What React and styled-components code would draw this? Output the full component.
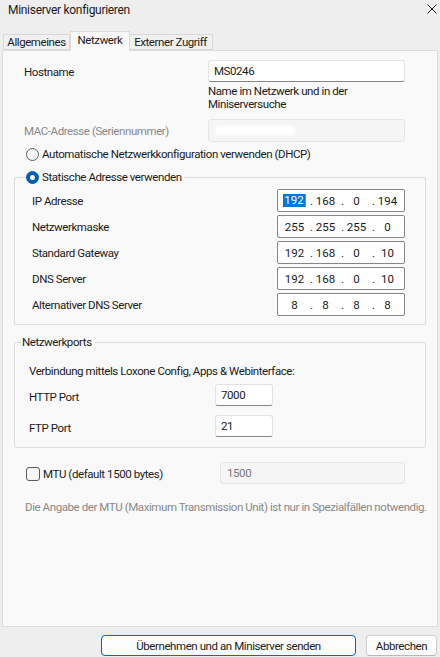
import React from 'react';
import styled, { createGlobalStyle } from 'styled-components';

const GlobalStyle = createGlobalStyle`
  html, body {
    margin: 0;
    padding: 0;
    background: #eeeeee;
  }
  body {
    font-family: "Segoe UI", Roboto, sans-serif;
    font-size: 11.5px;
    letter-spacing: -0.42px;
    color: #1b1b1b;
  }
  * {
    box-sizing: border-box;
  }
`;

const ipRows = [
    { label: 'IP Adresse', octets: ['192', '168', '0', '194'], focused: true },
    { label: 'Netzwerkmaske', octets: ['255', '255', '255', '0'] },
    { label: 'Standard Gateway', octets: ['192', '168', '0', '10'] },
    { label: 'DNS Server', octets: ['192', '168', '0', '10'] },
    { label: 'Alternativer DNS Server', octets: ['8', '8', '8', '8'] },
];

function CloseIcon() {
    return (
        <svg width="10" height="10" viewBox="0 0 10 10">
            <path d="M0.5 0.5 L9.5 9.5 M9.5 0.5 L0.5 9.5" stroke="#1b1b1b" strokeWidth="1" fill="none" />
        </svg>
    );
}

function IpField({ octets, focused }) {
    return (
        <IpBox>
            {octets.map((o, i) => (
                <React.Fragment key={i}>
                    <Octet>
                        {focused && i === 0 ? (
                            <>
                                <Selected>{o}</Selected>
                                <Caret />
                            </>
                        ) : (
                            o
                        )}
                    </Octet>
                    {i < 3 && <Dot>.</Dot>}
                </React.Fragment>
            ))}
        </IpBox>
    );
}

export default function App() {
    return (
        <>
            <GlobalStyle />
            <Dialog>
                <TitleBar>
                    <Title>Miniserver konfigurieren</Title>
                    <CloseButton>
                        <CloseIcon />
                    </CloseButton>
                </TitleBar>

                <TabStrip>
                    <Tab $w={67}>Allgemeines</Tab>
                    <Tab $w={60} $active>
                        Netzwerk
                    </Tab>
                    <Tab $w={85}>Externer Zugriff</Tab>
                </TabStrip>

                <TabPane>
                    <FieldRow $cols="184px 197px">
                        <Label $drop={2}>Hostname</Label>
                        <TextBox $h={22}>MS0246</TextBox>
                    </FieldRow>
                    <HelpText>
                        Name im Netzwerk und in der
                        <br />
                        Miniserversuche
                    </HelpText>

                    <FieldRow $cols="184px 197px" $top={8}>
                        <Label $muted>MAC-Adresse (Seriennummer)</Label>
                        <DisabledBox>
                            <Redacted />
                        </DisabledBox>
                    </FieldRow>

                    <OptionRow $top={4}>
                        <Radio />
                        <span>Automatische Netzwerkkonfiguration verwenden (DHCP)</span>
                    </OptionRow>

                    <GroupBox $top={7}>
                        <GroupLegend $left={11}>
                            <OptionRow>
                                <Radio $checked />
                                <span>Statische Adresse verwenden</span>
                            </OptionRow>
                        </GroupLegend>
                        <IpList>
                            {ipRows.map((r) => (
                                <IpRow key={r.label}>
                                    <Label>{r.label}</Label>
                                    <IpField octets={r.octets} focused={r.focused} />
                                </IpRow>
                            ))}
                        </IpList>
                    </GroupBox>

                    <GroupBox $top={9}>
                        <GroupLegend $left={6}>
                            <LegendText>Netzwerkports</LegendText>
                        </GroupLegend>
                        <PortIntro>Verbindung mittels Loxone Config, Apps &amp; Webinterface:</PortIntro>
                        <PortList>
                            <PortRow>
                                <Label $drop={3}>HTTP Port</Label>
                                <TextBox $h={22}>7000</TextBox>
                            </PortRow>
                            <PortRow>
                                <Label $drop={3}>FTP Port</Label>
                                <TextBox $h={22}>21</TextBox>
                            </PortRow>
                        </PortList>
                    </GroupBox>

                    <FieldRow $cols="194px 185px" $top={14} $indent={12}>
                        <CheckRow>
                            <Checkbox />
                            <span>MTU (default 1500 bytes)</span>
                        </CheckRow>
                        <DisabledBox $h={22}>1500</DisabledBox>
                    </FieldRow>

                    <Note>Die Angabe der MTU (Maximum Transmission Unit) ist nur in Spezialfällen notwendig.</Note>
                </TabPane>

                <Footer>
                    <Button $w={255} $primary>
                        Übernehmen und an Miniserver senden
                    </Button>
                    <Button $w={71}>Abbrechen</Button>
                </Footer>
            </Dialog>
        </>
    );
}

const Dialog = styled.div`
    width: 440px;
    height: 657px;
    display: flex;
    flex-direction: column;
    background: #eeeeee;
    overflow: hidden;
`;

const TitleBar = styled.div`
    height: 31px;
    flex-shrink: 0;
    display: flex;
    align-items: flex-start;
    justify-content: space-between;
    padding: 2px 3px 0 8px;
`;

const Title = styled.div`
    font-size: 12px;
    letter-spacing: -0.3px;
    line-height: 16px;
`;

const CloseButton = styled.div`
    display: flex;
    padding-top: 2px;
`;

const TabStrip = styled.div`
    height: 20px;
    flex-shrink: 0;
    display: flex;
    align-items: flex-start;
    padding-left: 3px;
    margin-bottom: -1px;
    position: relative;
    z-index: 1;
`;

const Tab = styled.div`
    width: ${(p) => p.$w}px;
    height: ${(p) => (p.$active ? 20 : 16)}px;
    margin-top: ${(p) => (p.$active ? 0 : 3)}px;
    margin-left: ${(p) => (p.$active ? 0 : -1)}px;
    margin-right: ${(p) => (p.$active ? -1 : 0)}px;
    display: flex;
    align-items: center;
    justify-content: center;
    padding-bottom: ${(p) => (p.$active ? 3 : 0)}px;
    background: ${(p) => (p.$active ? '#f9f9f9' : '#f0f0f0')};
    border: 1px solid #d9d9d9;
    border-bottom: ${(p) => (p.$active ? 'none' : '1px solid #d9d9d9')};
    position: relative;
    z-index: ${(p) => (p.$active ? 2 : 1)};
    white-space: nowrap;

    &:first-child {
        margin-left: 0;
    }
`;

const TabPane = styled.div`
    flex: 1;
    margin: 0 2px;
    background: #f9f9f9;
    border: 1px solid #dcdcdc;
    padding: 9px 11px 0;
    display: flex;
    flex-direction: column;
`;

const FieldRow = styled.div`
    display: grid;
    grid-template-columns: ${(p) => p.$cols};
    align-items: center;
    padding-left: ${(p) => p.$indent ?? 10}px;
    margin-top: ${(p) => p.$top ?? 0}px;
`;

const Label = styled.div`
    line-height: 16px;
    padding-top: ${(p) => p.$drop ?? 0}px;
    color: ${(p) => (p.$muted ? '#8a8a8a' : '#1b1b1b')};
    white-space: nowrap;
`;

const TextBox = styled.div`
    height: ${(p) => p.$h ?? 22}px;
    background: #ffffff;
    border: 1px solid #e3e3e3;
    border-bottom-color: #868686;
    border-radius: 3px;
    padding: 0 5px;
    display: flex;
    align-items: center;
    line-height: 16px;
`;

const DisabledBox = styled.div`
    height: ${(p) => p.$h ?? 23}px;
    background: #f5f5f5;
    border: 1px solid #e5e5e5;
    border-radius: 3px;
    padding: 0 6px;
    display: flex;
    align-items: center;
    color: #7a7a7a;
    line-height: 16px;
`;

const Redacted = styled.span`
    width: 80px;
    height: 9px;
    background: #ffffff;
    filter: blur(1.5px);
`;

const HelpText = styled.div`
    margin: 3px 0 0 194px;
    line-height: 13px;
`;

const OptionRow = styled.div`
    display: flex;
    align-items: center;
    gap: 3px;
    height: 16px;
    padding-left: ${(p) => (p.$top !== undefined ? 12 : 0)}px;
    margin-top: ${(p) => p.$top ?? 0}px;
    white-space: nowrap;
`;

const Radio = styled.span`
    width: 13px;
    height: 13px;
    border-radius: 50%;
    flex-shrink: 0;
    background: ${(p) => (p.$checked ? '#005fb8' : '#f6f6f6')};
    border: 1px solid ${(p) => (p.$checked ? '#005fb8' : '#5c5c5c')};
    display: flex;
    align-items: center;
    justify-content: center;

    &::after {
        content: '';
        display: ${(p) => (p.$checked ? 'block' : 'none')};
        width: 5px;
        height: 5px;
        border-radius: 50%;
        background: #ffffff;
    }
`;

const GroupBox = styled.fieldset`
    margin: ${(p) => p.$top ?? 0}px 0 0;
    padding: 0;
    min-width: 0;
    border: 1px solid #dcdcdc;
    border-radius: 2px;
`;

const GroupLegend = styled.legend`
    margin-left: ${(p) => p.$left}px;
    padding: 0 2px 0 0;
    line-height: 16px;
`;

const LegendText = styled.span`
    display: block;
    padding: 0 1px;
    line-height: 16px;
`;

const IpList = styled.div`
    display: flex;
    flex-direction: column;
    gap: 3px;
    padding: 4px 0 8px 17px;
`;

const IpRow = styled.div`
    display: grid;
    grid-template-columns: 245px 128px;
    align-items: center;
`;

const IpBox = styled.div`
    height: 23px;
    background: #ffffff;
    border: 1px solid #868686;
    border-radius: 2px;
    display: flex;
    align-items: center;
    padding-left: 4px;
    line-height: 16px;
    letter-spacing: 0;
`;

const Octet = styled.span`
    width: 25px;
    display: flex;
    justify-content: center;
    align-items: center;
`;

const Dot = styled.span`
    width: 6px;
    padding-left: 3px;
`;

const Selected = styled.span`
    background: #0078d7;
    color: #ffffff;
    line-height: 13px;
    padding: 0 1px;
`;

const Caret = styled.span`
    width: 1px;
    height: 13px;
    background: #c0782c;
`;

const PortIntro = styled.div`
    margin-top: 13px;
    padding-left: 14px;
    line-height: 16px;
    white-space: nowrap;
`;

const PortList = styled.div`
    display: flex;
    flex-direction: column;
    gap: 9px;
    padding: 5px 0 10px 14px;
`;

const PortRow = styled.div`
    display: grid;
    grid-template-columns: 186px 58px;
    align-items: center;
`;

const CheckRow = styled.div`
    display: flex;
    align-items: center;
    gap: 3px;
    padding-top: 1px;
    white-space: nowrap;
`;

const Checkbox = styled.span`
    width: 14px;
    height: 14px;
    border: 1px solid #5c5c5c;
    border-radius: 3px;
    background: #f6f6f6;
    flex-shrink: 0;
`;

const Note = styled.div`
    margin-top: 15px;
    padding-left: 11px;
    color: #8a8a8a;
    line-height: 16px;
    white-space: nowrap;
`;

const Footer = styled.div`
    height: 30px;
    flex-shrink: 0;
    display: flex;
    justify-content: flex-end;
    gap: 10px;
    padding: 8px 3px 0 0;
`;

const Button = styled.div`
    width: ${(p) => p.$w}px;
    height: 21px;
    display: flex;
    align-items: center;
    justify-content: center;
    background: #fdfdfd;
    border: 1px solid ${(p) => (p.$primary ? '#0067c0' : '#d0d0d0')};
    border-bottom-color: ${(p) => (p.$primary ? '#0067c0' : '#b8b8b8')};
    border-radius: 4px;
    white-space: nowrap;
`;
